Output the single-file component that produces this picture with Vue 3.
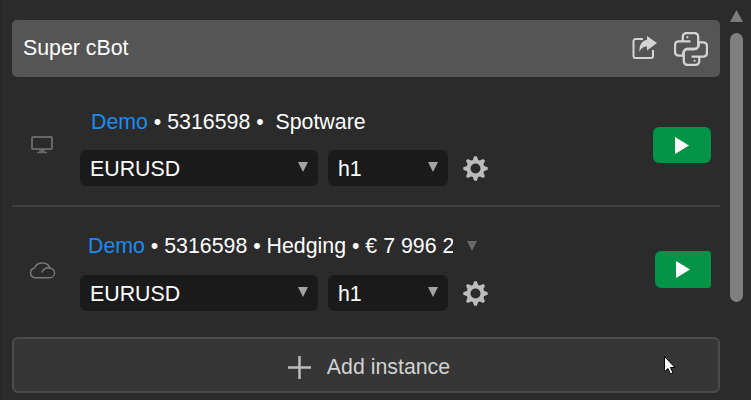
<script setup>
const teeth = [0, 45, 90, 135, 180, 225, 270, 315]
const rows = [
  { id: 1, kind: 'desktop', account: '• 5316598 •\u00a0\u00a0Spotware', caret: false },
  { id: 2, kind: 'cloud', account: '• 5316598 • Hedging • € 7 996 2', caret: true }
]
</script>

<template>
  <div class="app">
    <main class="panel">
      <header class="head">
        <span class="title">Super cBot</span>
        <svg class="share" width="25" height="25" viewBox="0 0 25 25" fill="none">
          <path d="M11 4H3.500A2 2 0 0 0 1.500 6V21A2 2 0 0 0 3.500 23H19A2 2 0 0 0 21 21V15" stroke="#d4d4d4" stroke-width="2" />
          <path d="M15 1L25 8L15 15.500V11.500C11.500 11.500 9 13 7.500 17C7 10 10 5.500 15 5Z" fill="#d4d4d4" />
        </svg>
        <svg class="python" width="34" height="34" viewBox="0 0 33 33" fill="none" stroke="#d4d4d4" stroke-width="2.200">
          <path d="M8.500 9V4.500A3.500 3.500 0 0 1 12 1H20A3.500 3.500 0 0 1 23.500 4.500V13A3.500 3.500 0 0 1 20 16.500H13A4 4 0 0 0 9 20.500V23H4.500A3.500 3.500 0 0 1 1 19.500V12.500A3.500 3.500 0 0 1 4.500 9H16" />
          <path d="M24.500 24V28.500A3.500 3.500 0 0 1 21 32H13A3.500 3.500 0 0 1 9.500 28.500V20A3.500 3.500 0 0 1 13 16.500H20A4 4 0 0 0 24 12.500V10H28.500A3.500 3.500 0 0 1 32 13.500V20.500A3.500 3.500 0 0 1 28.500 24H17" />
          <circle cx="13" cy="5" r="1" fill="#d4d4d4" stroke="none" />
          <circle cx="20" cy="28" r="1" fill="#d4d4d4" stroke="none" />
        </svg>
      </header>

      <section v-for="row in rows" :key="row.id" class="row" :class="'row-' + row.kind">
        <div class="source">
          <svg v-if="row.kind === 'desktop'" width="22" height="18" viewBox="0 0 22 18" fill="none">
            <rect x="1" y="1" width="20" height="12" rx="1" stroke="#666" stroke-width="2" />
            <path d="M9 13H13V16H9ZM6 16.500H16" stroke="#666" stroke-width="1.500" fill="#666" />
          </svg>
          <svg v-else width="28" height="18" viewBox="0 0 28 18" fill="none">
            <path d="M6.500 16.800H21.500A4.800 4.800 0 0 0 22 7.200A8 7 0 0 0 6.600 7A5 5 0 0 0 6.500 16.800ZM14 11.500A6 6 0 0 1 22 7.200" stroke="#7a7a7a" stroke-width="1.400" />
          </svg>
        </div>

        <div class="config">
          <div class="meta">
            <p class="account"><span class="demo">Demo</span> {{ row.account }}</p>
            <i v-if="row.caret" class="caret caret-dim"></i>
          </div>
          <div class="controls">
            <div class="select symbol"><span class="value">EURUSD</span><i class="caret"></i></div>
            <div class="select frame"><span class="value">h1</span><i class="caret"></i></div>
            <svg class="gear" width="25" height="25" viewBox="0 0 25 25">
              <path v-for="a in teeth" :key="a" d="M11.200 0.300H13.800L15.500 5H9.500Z" fill="#bcbcbc" :transform="`rotate(${a} 12.500 12.500)`" />
              <circle cx="12.500" cy="12.500" r="7" fill="none" stroke="#bcbcbc" stroke-width="4" />
            </svg>
          </div>
        </div>

        <button class="play" type="button">
          <svg width="14" height="17" viewBox="0 0 14 17"><path d="M0 0L14 8.500L0 17Z" fill="#fff" /></svg>
        </button>
      </section>

      <button class="add" type="button">
        <svg width="23" height="23" viewBox="0 0 23 23"><path d="M11.500 0V23M0 11.500H23" stroke="#bcbcbc" stroke-width="2.500" /></svg>
        <span>Add instance</span>
      </button>
    </main>

    <aside class="scroll">
      <svg width="13" height="12" viewBox="0 0 13 12"><path d="M6.500 0L13 12H0Z" fill="#7c7c7c" /></svg>
      <div class="thumb"></div>
    </aside>

    <svg class="cursor" width="12" height="19" viewBox="0 0 12 19">
      <path d="M0.500 0.500V15.500L4 12.500L6.500 18L9 17L6.500 11.500H11Z" fill="#fff" stroke="#000" />
    </svg>
  </div>
</template>

<style scoped>
.app {
  position: relative;
  display: flex;
  width: 751px;
  height: 400px;
  overflow: hidden;
  background: #2b2b2b;
  border-left: 2px solid #262626;
  box-sizing: border-box;
  color: #fff;
  font-family: "Liberation Sans", Arial, sans-serif;
  font-size: 21.33px;
}
.panel {
  width: 718px;
  padding: 20px 0 0 10px;
  box-sizing: border-box;
}
.head {
  display: flex;
  align-items: center;
  height: 57px;
  padding: 0 11px;
  background: #555;
  border-radius: 5px;
  box-sizing: border-box;
}
.title {
  flex: 1;
}
.share {
  margin: 0 0 2px 0;
}
.python {
  margin: 0 1px 0 17px;
}
.row {
  display: flex;
  align-items: center;
  padding-right: 9px;
  box-sizing: border-box;
}
.row-desktop {
  height: 130px;
  padding-top: 33px;
  padding-bottom: 19px;
  border-bottom: 2px solid #404040;
}
.row-cloud {
  height: 130px;
  padding-top: 27px;
  padding-bottom: 26px;
}
.source {
  display: flex;
  justify-content: center;
  width: 59px;
  margin-right: 9px;
}
.row-desktop .source,
.row-desktop .play,
.row-cloud .source,
.row-cloud .play {
  margin-bottom: 6px;
}
.config {
  flex: 1;
}
.meta {
  display: flex;
  align-items: center;
  height: 24px;
  margin-bottom: 16px;
  padding-left: 11px;
}
.row-cloud .meta {
  margin-bottom: 17px;
  padding-left: 8px;
}
.account {
  margin: 0;
  max-width: 365px;
  overflow: hidden;
  white-space: nowrap;
}
.demo {
  color: #1a8cf0;
}
.controls {
  display: flex;
  align-items: center;
}
.select {
  display: flex;
  align-items: center;
  justify-content: space-between;
  height: 36px;
  padding: 0 10px;
  background: #1a1a1a;
  border-radius: 6px;
  box-sizing: border-box;
}
.value {
  padding-top: 2px;
}
.symbol {
  width: 238px;
  margin-right: 10px;
}
.frame {
  width: 120px;
}
.caret {
  display: block;
  width: 0;
  height: 0;
  margin-bottom: 3px;
  border-left: 5px solid transparent;
  border-right: 5px solid transparent;
  border-top: 10px solid #a3a3a3;
}
.caret-dim {
  margin: 0 0 0 14px;
  border-top-color: #696969;
}
.gear {
  margin-left: 15px;
}
.play {
  display: flex;
  align-items: center;
  justify-content: center;
  width: 58px;
  height: 36px;
  padding: 0;
  background: #019447;
  border: 0;
  border-radius: 6px;
}
.row-cloud .play {
  width: 56px;
  height: 37px;
  border-radius: 6px 3px 3px 6px;
}
.add {
  display: flex;
  align-items: center;
  justify-content: center;
  gap: 16px;
  width: 708px;
  height: 56px;
  padding: 5px 0 0 6px;
  background: #363636;
  border: 2px solid #4b4b4b;
  border-radius: 6px;
  box-sizing: border-box;
  color: #d2d2d2;
  font-family: inherit;
  font-size: 21.33px;
}
.scroll {
  display: flex;
  flex-direction: column;
  align-items: center;
  width: 13px;
  margin-left: 10px;
  padding-top: 10px;
}
.scroll svg {
  flex: none;
}
.thumb {
  width: 13px;
  height: 269px;
  margin-top: 11px;
  background: #7f7f7f;
  border-radius: 7px;
}
.cursor {
  position: absolute;
  left: 662px;
  top: 356px;
}
</style>
